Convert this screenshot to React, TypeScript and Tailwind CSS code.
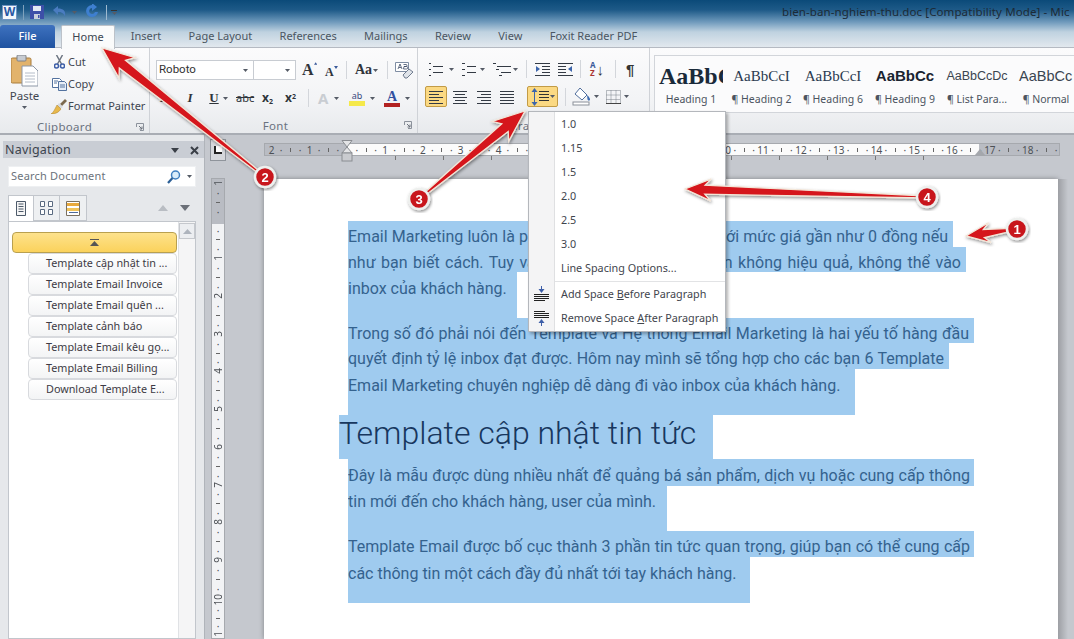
import React from 'react';

const ui = { fontFamily: '"Noto Sans", "Liberation Sans", sans-serif' };
const serif = { fontFamily: '"Liberation Serif", serif' };

const Caret = ({ className = '' }: { className?: string }) => (
  <svg width="5" height="3" viewBox="0 0 5 3" className={className}>
    <path d="M0 0h5L2.5 3z" fill="#555b66" />
  </svg>
);

const Lines = ({ rows, w = 14 }: { rows: number[][]; w?: number }) => (
  <svg width={w} height="14" viewBox={`0 0 ${w} 14`}>
    {rows.map(([x, l], i) => (
      <rect key={i} x={x} y={1 + i * 3} width={l} height="1" fill="#333a44" />
    ))}
  </svg>
);

const IndentIcon = ({ flip = false }: { flip?: boolean }) => (
  <svg width="15" height="14" viewBox="0 0 15 14" className={flip ? '-scale-x-100' : ''}>
    {[1, 4, 7, 10, 13].map((y, i) => (
      <rect key={y} x={i === 0 || i === 4 ? 0 : 7} y={y} width={i === 0 || i === 4 ? 15 : 8} height="1" fill="#333a44" />
    ))}
    <path d="M5 7L1 4v6z" fill="#3d65ab" />
  </svg>
);

const SaveIcon = () => (
  <svg width="14" height="14" viewBox="0 0 14 14">
    <path d="M0 0h14v14H0z" fill="#3d4fa8" />
    <path d="M3 1h8v5H3z" fill="#e4e9f4" />
    <path d="M4 9h6v5H4z" fill="#c8cfdc" />
    <path d="M8 10h1.500v3H8z" fill="#3d4fa8" />
  </svg>
);

const UndoIcon = () => (
  <svg width="15" height="14" viewBox="0 0 15 14">
    <path d="M1 5l5-4v2.500c5 0 8 2 7 8-1-3-3-4.500-7-4.500v3z" fill="#4a7cc0" />
  </svg>
);

const RedoIcon = () => (
  <svg width="14" height="16" viewBox="0 0 14 16">
    <path d="M7 1a6 6 0 1 0 6 7h-3a3 3 0 1 1-3-4v3l5-4-5-4z" fill="#3e7fd0" />
  </svg>
);

const PasteIcon = () => (
  <svg width="27" height="32" viewBox="0 0 27 32">
    <rect x="0" y="3" width="20" height="25" rx="1.500" fill="#e2b36c" stroke="#a97c3c" />
    <rect x="6" y="0" width="9" height="6" rx="1" fill="#c7cbd1" stroke="#7e8288" />
    <path d="M11 11h11l5 5v15H11z" fill="#fff" stroke="#8d97a6" />
    <path d="M14 18h10M14 21h10M14 24h10M14 27h10" stroke="#b4bcc8" />
  </svg>
);

const ScissorsIcon = () => (
  <svg width="11" height="14" viewBox="0 0 11 14">
    <path d="M2.500 0l5 9M8.500 0l-5 9" stroke="#6d7582" strokeWidth="1.500" />
    <circle cx="2.500" cy="11" r="2" fill="none" stroke="#3d5ea8" strokeWidth="1.500" />
    <circle cx="8.500" cy="11" r="2" fill="none" stroke="#3d5ea8" strokeWidth="1.500" />
  </svg>
);

const CopyIcon = () => (
  <svg width="15" height="13" viewBox="0 0 15 13">
    <path d="M.5.500h7l2 2v7h-9z" fill="#fff" stroke="#53729f" />
    <path d="M6.500 3.500h6l2 2v7h-8z" fill="#e7eef8" stroke="#53729f" />
    <path d="M8 7h5M8 9h5M2 3h4M2 5h3" stroke="#53729f" />
  </svg>
);

const BrushIcon = () => (
  <svg width="16" height="15" viewBox="0 0 16 15">
    <path d="M9 5l5-5 2 2-5 5z" fill="#7d6a4f" />
    <path d="M8 4l4 4-3 2-3-3z" fill="#d7d9dd" />
    <path d="M6 6l4 4c-2 3-5 5-10 5 2-1 4-5 6-9z" fill="#e8b94c" stroke="#a87f2b" strokeWidth=".5" />
  </svg>
);

const ClearIcon = () => (
  <svg width="18" height="17" viewBox="0 0 18 17">
    <path d="M.5.500h13v9H.5z" fill="#fff" stroke="#7f8da3" />
    <path d="M3 7l2-5 2 5M4 5.500h2M8.500 2.500h2.500a1 1 0 0 1 0 2H9m0 0h2.500a1 1 0 0 1 0 2.500H8.500z" fill="none" stroke="#3c4a66" strokeWidth=".8" />
    <path d="M8 13l6-6 4 3-6 6H10z" fill="#dfe3e9" stroke="#6f7b8e" />
  </svg>
);

const ShadingIcon = () => (
  <svg width="20" height="19" viewBox="0 0 20 19">
    <path d="M8 1l7 7-5 5-7-6z" fill="#fff" stroke="#4f6d9c" />
    <path d="M15 8c2 2 3 3 3 4.500s-2 1.500-2.500 0z" fill="#3d6bb0" />
    <rect x="1" y="15" width="16" height="3" fill="#fff" stroke="#8a9099" />
  </svg>
);

const BorderIcon = () => (
  <svg width="15" height="14" viewBox="0 0 15 14">
    <path d="M.5.500h14v13H.5zM5 .5v13M10 .5v13M.5 5h14M.5 9.500h14" fill="none" stroke="#7a8088" strokeDasharray="1 1" />
    <path d="M0 13.500h15" stroke="#444" />
  </svg>
);

const SpacingIcon = () => (
  <svg width="18" height="18" viewBox="0 0 18 18">
    <path d="M3.500 0l3 4h-6z" fill="#3d65ab" />
    <path d="M3.500 18l3-4h-6z" fill="#3d65ab" />
    <path d="M3.500 4v10" stroke="#3d65ab" />
    <path d="M8 3.500h10M8 6.500h10M8 9.500h10M8 12.500h10" stroke="#333" />
  </svg>
);

const AddSpaceIcon = ({ flip = false }: { flip?: boolean }) => (
  <svg width="15" height="16" viewBox="0 0 15 16" className={flip ? '-scale-y-100' : ''}>
    <path d="M7.500 0v4" stroke="#3d5ea8" />
    <path d="M7.500 7l-3-4h6z" fill="#3d5ea8" />
    <path d="M0 8.500h15M0 10.500h15M0 12.500h15M0 14.500h11" stroke="#222" />
  </svg>
);

const Launcher = () => (
  <svg width="8" height="8" viewBox="0 0 8 8">
    <path d="M.5 4V.5H7.500V7.500H4" fill="none" stroke="#8b919b" />
    <path d="M3 3l3 3M6 3.500V6H3.500" fill="none" stroke="#6d737d" />
  </svg>
);

const Sep = ({ className = '' }: { className?: string }) => <div className={`w-px h-[18px] bg-[#d3d6db] ${className}`} />;

const GroupLabel = ({ text, width, shift = 0 }: { text: string; width: number; shift?: number }) => (
  <div className="h-[18px] flex items-center relative text-[11.500px] text-[#6a7280] tracking-[0.3px] translate-y-[1px]" style={{ width }}>
    <span className="mx-auto" style={{ paddingRight: shift }}>{text}</span>
    <span className="absolute right-[5px] top-[5px]">
      <Launcher />
    </span>
  </div>
);

const tabs = ['Insert', 'Page Layout', 'References', 'Mailings', 'Review', 'View', 'Foxit Reader PDF'];

const TopBars = () => (
  <div className="h-[48px] bg-[linear-gradient(to_bottom,#0b4a79_0px,#1e5a88_10px,#6f9abc_22px,#bfd2e0_32px,#e2e8ee_47px)] border-b border-[#b5bac2] relative">
    <div className="h-[24px] flex items-center pl-[2px]">
      <div className="w-[15px] h-[15px] bg-[#f3f6fb] border border-[#6f93c2] flex items-center justify-center text-[12px] leading-none font-bold text-[#2857a4]">W</div>
      <div className="w-px h-[15px] bg-[#7fa2bd] ml-[6px]" />
      <div className="ml-[6px]"><SaveIcon /></div>
      <div className="ml-[8px]"><UndoIcon /></div>
      <Caret className="ml-[5px]" />
      <div className="ml-[8px]"><RedoIcon /></div>
      <div className="w-px h-[15px] bg-[#9ebad0] ml-[7px]" />
      <div className="ml-[4px] flex flex-col items-center gap-[1px]">
        <div className="w-[6px] h-px bg-[#333]" />
        <Caret />
      </div>
      <div className="ml-auto text-[11.500px] text-[#1c2a36] whitespace-nowrap w-[292px] tracking-[0.1px]" style={ui}>bien-ban-nghiem-thu.doc [Compatibility Mode] - Mic</div>
    </div>
    <div className="h-[24px] flex items-end text-[11px]" style={ui}>
      <div className="w-[55px] h-[23px] bg-[linear-gradient(to_bottom,#3e72bf,#1f52a0)] rounded-t-[3px] text-white font-medium flex items-center justify-center">File</div>
      <div className="w-[54px] h-[24px] ml-[6px] bg-[#fafbfb] border border-b-0 border-[#bcc2c9] rounded-t-[2px] text-[#3d4650] flex items-center justify-center relative -mb-px z-[1]">Home</div>
      <div className="flex h-[23px] items-center pl-[2px] text-[#4b5662]">
        {tabs.map((t) => (
          <span key={t} className="px-[13.700px] whitespace-nowrap">{t}</span>
        ))}
      </div>
    </div>
  </div>
);

const ClipboardGroup = () => (
  <div className="w-[150px] flex flex-col border-r border-[#cfd2d7]">
    <div className="flex h-[69px]">
      <div className="w-[50px] flex flex-col items-center pt-[7px] pr-[1px]">
        <PasteIcon />
        <span className="text-[11.500px] mt-[1px] text-[#3f4650] leading-[15px]">Paste</span>
        <Caret className="mt-[3px]" />
      </div>
      <div className="flex flex-col text-[11px] text-[#3f4650] pt-[3px]">
        {[
          { label: 'Cut', icon: <ScissorsIcon /> },
          { label: 'Copy', icon: <CopyIcon /> },
          { label: 'Format Painter', icon: <BrushIcon /> },
        ].map((r) => (
          <div key={r.label} className="h-[22px] flex items-center whitespace-nowrap">
            <span className="w-[18px] flex justify-center">{r.icon}</span>
            <span>{r.label}</span>
          </div>
        ))}
      </div>
    </div>
    <GroupLabel text="Clipboard" width={149} shift={20} />
  </div>
);

const FontGroup = () => (
  <div className="w-[268px] flex flex-col border-r border-[#cfd2d7]">
    <div className="h-[69px] pl-[6px] pt-[12px]">
      <div className="flex items-center h-[20px]">
        <div className="w-[98px] h-[20px] bg-white border border-[#c8ccd2] flex items-center justify-between px-[2px] pr-[5px] text-[11.500px] text-[#333]" style={{ fontFamily: 'Roboto, sans-serif' }}>
          Roboto <Caret />
        </div>
        <div className="w-[42px] h-[20px] bg-white border border-l-0 border-[#c8ccd2] flex items-center justify-end pr-[5px]"><Caret /></div>
        <div className="ml-[6px] w-[15px] text-[16px] font-bold leading-none text-[#30343a] flex items-start" style={serif}>A<svg width="4" height="3" viewBox="0 0 4 3"><path d="M0 3h4L2 0z" fill="#3b5a9a" /></svg></div>
        <div className="ml-[8px] w-[15px] text-[12px] font-bold leading-none text-[#30343a] mt-[3px] flex items-start" style={serif}>A<svg width="4" height="3" viewBox="0 0 4 3"><path d="M0 0h4L2 3z" fill="#3b5a9a" /></svg></div>
        <Sep className="ml-[6px]" />
        <div className="ml-[8px] w-[24px] flex items-center text-[14px] font-bold leading-none text-[#30343a]" style={serif}>Aa<Caret className="ml-[1px]" /></div>
        <Sep className="ml-[8px]" />
        <div className="ml-[7px]"><ClearIcon /></div>
      </div>
      <div className="flex items-center h-[20px] mt-[8px] text-[#2f343a] font-bold">
        <span className="w-[14px] text-center ml-[1px] text-[13px]" style={serif}>B</span>
        <span className="ml-[13px] w-[12px] text-center text-[13px] italic" style={serif}>I</span>
        <span className="ml-[12px] w-[12px] text-center text-[13px] underline" style={serif}>U</span>
        <Caret className="ml-[3px]" />
        <span className="ml-[8px] w-[18px] text-[11px] font-normal line-through">abc</span>
        <span className="ml-[8px] w-[14px] text-[12px]">x<sub className="text-[7px]">2</sub></span>
        <span className="ml-[9px] w-[14px] text-[12px]">x<sup className="text-[7px]">2</sup></span>
        <Sep className="ml-[9px]" />
        <span className="ml-[9px] w-[14px] text-[15px] leading-none text-[#c9cdd2]">A</span>
        <Caret className="ml-[2px]" />
        <div className="ml-[10px] w-[16px] flex flex-col items-center">
          <span className="text-[9px] leading-[11px] font-normal text-[#3a4a80]">ab</span>
          <span className="w-[16px] h-[5px] bg-[#f5e94a]" />
        </div>
        <Caret className="ml-[5px]" />
        <div className="ml-[9px] w-[16px] flex flex-col items-center">
          <span className="text-[14px] leading-[13px] text-[#3250a0]" style={serif}>A</span>
          <span className="w-[16px] h-[4px] bg-[#b22222]" />
        </div>
        <Caret className="ml-[5px]" />
      </div>
    </div>
    <GroupLabel text="Font" width={267} shift={16} />
  </div>
);

const ParagraphGroup = () => (
  <div className="w-[232px] flex flex-col border-r border-[#cfd2d7]">
    <div className="h-[69px] pl-[7px] pt-[11px]">
      <div className="flex items-center h-[20px] pl-[4px]">
        <Lines rows={[[0, 2], [4, 10], [0, 2], [4, 10], [0, 2]]} />
        <Caret className="ml-[6px]" />
        <div className="ml-[8px]"><Lines rows={[[0, 3], [5, 9], [0, 3], [5, 9], [0, 3]]} /></div>
        <Caret className="ml-[4px]" />
        <div className="ml-[8px]"><Lines w={18} rows={[[0, 3], [4, 14], [3, 3], [8, 10], [6, 3]]} /></div>
        <Caret className="ml-[2px]" />
        <Sep className="ml-[8px]" />
        <div className="ml-[8px]"><IndentIcon /></div>
        <div className="ml-[8px]"><IndentIcon flip /></div>
        <Sep className="ml-[7px]" />
        <div className="ml-[9px] w-[16px] flex items-center gap-[1px] text-[8px] leading-[8px] font-bold text-[#3b5a9a]">
          <span className="flex flex-col"><span>A</span><span className="text-[#a33]">Z</span></span>
          <span className="text-[15px] leading-none text-[#333] font-normal">↓</span>
        </div>
        <Sep className="ml-[9px]" />
        <span className="ml-[10px] text-[15px] leading-none text-[#333] font-bold" style={{ fontFamily: '"Liberation Sans", sans-serif' }}>¶</span>
      </div>
      <div className="flex items-center h-[21px] mt-[7px]">
        <div className="w-[22px] h-[21px] bg-[#fbd983] border border-[#c29b46] rounded-[2px] flex items-center justify-center"><Lines w={14} rows={[[0, 14], [0, 10], [0, 14], [0, 10], [0, 14]]} /></div>
        <div className="ml-[6px] w-[14px]"><Lines rows={[[0, 14], [2, 10], [0, 14], [2, 10], [0, 14]]} /></div>
        <div className="ml-[10px] w-[14px]"><Lines rows={[[0, 14], [4, 10], [0, 14], [4, 10], [0, 14]]} /></div>
        <div className="ml-[9px] w-[14px]"><Lines rows={[[0, 14], [0, 14], [0, 14], [0, 14], [0, 14]]} /></div>
        <div className="ml-[13px] w-[31px] h-[21px] bg-[#fbd983] border border-[#c29b46] rounded-[2px] flex items-center pl-[3px] gap-[1px]">
          <SpacingIcon /><Caret />
        </div>
        <Sep className="ml-[7px]" />
        <div className="ml-[6px]"><ShadingIcon /></div>
        <Caret className="ml-[2px]" />
        <div className="ml-[7px]"><BorderIcon /></div>
        <Caret className="ml-[3px]" />
      </div>
    </div>
    <GroupLabel text="Paragraph" width={231} />
  </div>
);

const styleCells = [
  { sample: 'AaBbC', label: 'Heading 1', cls: 'text-[24px] font-bold text-[#1a2a3a] w-[64px] text-left', font: '"Liberation Serif", serif', w: 70 },
  { sample: 'AaBbCcI', label: '¶ Heading 2', cls: 'text-[15px] text-[#2a3a50] w-[66px] text-center', font: '"Liberation Serif", serif', w: 71 },
  { sample: 'AaBbCcI', label: '¶ Heading 6', cls: 'text-[15px] text-[#2a3a50] w-[66px] text-center', font: '"Liberation Serif", serif', w: 72 },
  { sample: 'AaBbCc', label: '¶ Heading 9', cls: 'text-[15px] font-bold text-[#1a2430] w-[66px] text-center', font: '"Liberation Sans", sans-serif', w: 72 },
  { sample: 'AaBbCcDc', label: '¶ List Para...', cls: 'text-[12.500px] text-[#3a4550] w-[62px] text-center', font: '"Liberation Sans", sans-serif', w: 72 },
  { sample: 'AaBbCc', label: '¶ Normal', cls: 'text-[14.500px] text-[#3a4550] w-[62px] text-left pl-[4px]', font: '"Liberation Sans", sans-serif', w: 66 },
];

const StylesGroup = () => (
  <div className="flex-1 pl-[4px] pt-[7px] min-w-0">
    <div className="h-[58px] border border-r-0 border-[#d2d5da] bg-[#fbfbfc] flex pl-[1px] overflow-hidden">
      {styleCells.map((c) => (
        <div key={c.label} className="flex flex-col items-center shrink-0 pt-[9px] overflow-hidden" style={{ width: c.w }}>
          <div className={`h-[22px] leading-[22px] whitespace-nowrap overflow-hidden ${c.cls}`} style={{ fontFamily: c.font }}>{c.sample}</div>
          <div className="text-[10.500px] text-[#4b5460] mt-[5px] whitespace-nowrap leading-[14px]">{c.label}</div>
        </div>
      ))}
    </div>
  </div>
);

const Ribbon = () => (
  <div className="h-[87px] flex bg-[linear-gradient(to_bottom,#fbfbfc,#f3f4f6_60%,#e8eaed)] border-b-2 border-[#a9adb4]" style={ui}>
    <ClipboardGroup />
    <FontGroup />
    <ParagraphGroup />
    <StylesGroup />
  </div>
);

const navItems = [
  'Template cập nhật tin ...',
  'Template Email Invoice',
  'Template Email quên ...',
  'Template cảnh báo',
  'Template Email kêu gọ...',
  'Template Email Billing',
  'Download Template E...',
];

const NavPane = () => (
  <div className="w-[205px] shrink-0 bg-[#e6e8eb] border-r border-[#b0b4ba] flex flex-col pt-[6px]" style={ui}>
    <div className="h-[17px] bg-[#c9cdd4] ml-[3px] flex items-center pl-[2px] pt-[2px] text-[12.500px] text-[#3d444e] tracking-[0.2px]">
      Navigation
      <svg width="8" height="5" viewBox="0 0 8 5" className="ml-auto mr-[11px]"><path d="M0 0h8L4 5z" fill="#3a3f47" /></svg>
      <svg width="9" height="9" viewBox="0 0 9 9" className="mr-[5px]"><path d="M1 1l7 7M8 1l-7 7" stroke="#3a3f47" strokeWidth="2" /></svg>
    </div>
    <div className="mt-[8px] mx-[8px] h-[21px] bg-white border border-[#eef0f2] flex items-center pl-[2px] text-[11px] text-[#6b727b] tracking-[0.2px]">
      Search Document
      <svg width="14" height="14" viewBox="0 0 14 14" className="ml-auto mr-[6px]">
        <circle cx="8.500" cy="5" r="4" fill="#d9ecfa" stroke="#3f7fc0" strokeWidth="1.500" />
        <path d="M5.500 8L1 13" stroke="#2c5f96" strokeWidth="2.200" />
      </svg>
      <Caret className="mr-[3px]" />
    </div>
    <div className="mt-[8px] mx-[8px] h-[26px] flex items-end">
      <div className="w-[26px] h-[26px] bg-white border border-b-0 border-[#c2c6cc] flex items-center justify-center">
        <svg width="10" height="15" viewBox="0 0 10 15"><path d="M.5.500h9v14h-9zM2.500 3h5M2.500 5.500h5M2.500 8h5M2.500 10.500h5" fill="#f5f5f5" stroke="#4d5a6a" /></svg>
      </div>
      <div className="w-[26px] h-[26px] bg-[#eef0f2] border border-l-0 border-[#c2c6cc] flex items-center justify-center">
        <svg width="13" height="14" viewBox="0 0 13 14"><path d="M.5.500h4v5h-4zM8.500.500h4v5h-4zM.5 8.500h4v5h-4zM8.500 8.500h4v5h-4z" fill="#fff" stroke="#5a6a80" /></svg>
      </div>
      <div className="w-[27px] h-[26px] bg-[#eef0f2] border border-l-0 border-[#c2c6cc] flex items-center justify-center">
        <svg width="14" height="15" viewBox="0 0 14 15"><path d="M.5.500h13v14H.5z" fill="#fff" stroke="#7a7060" /><path d="M1 2h12v3H1z" fill="#e8a93c" /><path d="M1 7h12v3H1z" fill="#f0c35a" /><path d="M3 11.500h9" stroke="#4d6a9a" /></svg>
      </div>
      <svg width="10" height="6" viewBox="0 0 10 6" className="ml-auto mb-[10px]"><path d="M0 6h10L5 0z" fill="#b9bdc3" /></svg>
      <svg width="10" height="6" viewBox="0 0 10 6" className="mb-[10px] mr-[6px] ml-[12px]"><path d="M0 0h10L5 6z" fill="#6b7078" /></svg>
    </div>
    <div className="flex-1 mx-[8px] bg-white border border-[#c2c6cc] flex min-h-0">
      <div className="flex-1 min-w-0 pl-[3px] pt-[10px] flex flex-col pr-[1px]">
        <div className="h-[21px] bg-[linear-gradient(to_bottom,#fde28c,#fbd25c)] border border-[#b9a04f] rounded-[4px] flex items-center justify-center">
          <svg width="9" height="7" viewBox="0 0 9 7"><path d="M0 .5h9" stroke="#555" /><path d="M0 7l4.500-5L9 7z" fill="#555" /></svg>
        </div>
        <div className="flex flex-col ml-[16px]">
          {navItems.map((t) => (
            <div key={t} className="h-[21px] bg-[linear-gradient(to_bottom,#fff,#f3f4f5)] border border-[#d8dade] rounded-[4px] pl-[17px] flex items-center text-[10.800px] text-[#3d3a44] whitespace-nowrap overflow-hidden">
              {t}
            </div>
          ))}
        </div>
      </div>
      <div className="w-[17px] shrink-0 bg-[#f5f5f6] border-l border-[#e0e2e5] pt-[1px]">
        <div className="h-[16px] bg-[#eceef1] border border-[#c5c8cd] flex items-center justify-center">
          <svg width="9" height="5" viewBox="0 0 9 5"><path d="M0 5h9L4.500 0z" fill="#aeb4bd" /></svg>
        </div>
      </div>
    </div>
  </div>
);

const hLabels = ['2', '1', '', '1', '2', '3', '4', '5', '6', '7', '8', '9', '10', '11', '12', '13', '14', '15', '16', '17', '18'];
const vLabels = ['1', '', '1', '2', '3', '4', '5', '6', '7', '8', '9', '10', '11'];

const RulerCell = ({ label, vertical = false }: { label: string; vertical?: boolean }) => {
  const slot = 'flex-1 flex items-center justify-center min-w-0';
  const tick = vertical ? 'w-[4px] h-px bg-[#666]' : 'w-px h-[4px] bg-[#666]';
  return (
    <div className={`shrink-0 flex ${vertical ? 'flex-col h-[37.700px] w-full' : 'w-[37.800px] h-full'}`}>
      <span className={`${slot} ${vertical ? '[writing-mode:vertical-rl] rotate-180' : ''}`}>{label}</span>
      <span className={slot}>·</span>
      <span className={slot}><span className={tick} /></span>
      <span className={slot}>·</span>
    </div>
  );
};

type Line = { text: string; box: number; h: number; fit?: number; pad?: number };

const para1: Line[] = [
  { text: 'Email Marketing luôn là phương pháp hiệu quả nhất với mức giá gần như 0 đồng nếu', box: 605, h: 26, fit: 600 },
  { text: 'như bạn biết cách. Tuy vậy, nhiều chiến dịch của bạn không hiệu quả, không thể vào', box: 618, h: 25, fit: 613 },
  { text: 'inbox của khách hàng.', box: 169, h: 46, pad: 4 },
];
const para2: Line[] = [
  { text: 'Trong số đó phải nói đến Template và Hệ thống Email Marketing là hai yếu tố hàng đầu', box: 626, h: 25, fit: 621 },
  { text: 'quyết định tỷ lệ inbox đạt được. Hôm nay mình sẽ tổng hợp cho các bạn 6 Template', box: 601, h: 26, fit: 596 },
  { text: 'Email Marketing chuyên nghiệp dễ dàng đi vào inbox của khách hàng.', box: 507, h: 46, pad: 4 },
];
const para3: Line[] = [
  { text: 'Đây là mẫu được dùng nhiều nhất để quảng bá sản phẩm, dịch vụ hoặc cung cấp thông', box: 626, h: 27, fit: 622, pad: 4 },
  { text: 'tin mới đến cho khách hàng, user của mình.', box: 319, h: 45 },
  { text: 'Template Email được bố cục thành 3 phần tin tức quan trọng, giúp bạn có thể cung cấp', box: 626, h: 26, fit: 622, pad: 3 },
  { text: 'các thông tin một cách đầy đủ nhất tới tay khách hàng.', box: 402, h: 46, pad: 4 },
];

const DocLines = ({ lines }: { lines: Line[] }) => (
  <>
    {lines.map((l) => (
      <div key={l.text} className="bg-[#9fcbef] overflow-hidden" style={{ width: l.box, height: l.h, paddingTop: l.pad ?? 3 }}>
        <div
          className={`leading-[26px] ${l.fit ? '[text-align-last:justify]' : 'whitespace-nowrap'}`}
          style={l.fit ? { width: l.fit } : undefined}
        >
          {l.text}
        </div>
      </div>
    ))}
  </>
);

const Page = () => (
  <div className="ml-[39px] w-[794px] shrink-0 bg-white pl-[84px] pt-[42px] text-[16px] text-[#34628e] overflow-hidden shadow-[0_0_5px_rgba(0,0,0,0.35)]" style={{ fontFamily: 'Roboto, sans-serif' }}>
    <DocLines lines={para1} />
    <DocLines lines={para2} />
    <div className="ml-[-9px] w-[374px] h-[44px] bg-[#9fcbef] text-[32px] leading-[36px] font-light text-[#17375e] whitespace-nowrap">Template cập nhật tin tức</div>
    <DocLines lines={para3} />
  </div>
);

const Workspace = () => (
  <div className="flex-1 min-w-0 flex flex-col bg-[#c5c8ce]" style={ui}>
    <div className="h-[44px] flex relative shrink-0">
      <div className="ml-[5px] mt-[4px] w-[16px] h-[22px] bg-[#d5d7db] border border-[#8f949b] flex items-center justify-center">
        <div className="w-[8px] h-[8px] bg-white border-l-2 border-b-2 border-[#222]" />
      </div>
      <div className="ml-[38px] mt-[8px] w-[796px] flex flex-col">
        <div className="h-[13px] border border-[#a6a9ae] overflow-hidden bg-[linear-gradient(to_right,#b9bcc3_83px,#fbfbfb_83px,#fbfbfb_714px,#b9bcc3_714px)] text-[10px] leading-none text-[#4d5156] flex pl-[2px]">
          {hLabels.map((l, i) => (
            <RulerCell key={i} label={l} />
          ))}
        </div>
        <div className="h-[4px] flex pl-[131px]">
          {Array.from({ length: 12 }).map((_, i) => (
            <div key={i} className="w-[48px] shrink-0 border-l border-[#777]" />
          ))}
        </div>
      </div>
      <svg width="12" height="22" viewBox="0 0 12 22" className="absolute left-[136px] top-[5px]">
        <path d="M1 .5h10L6 7l5 6H1l5-6z" fill="#e3e4e6" stroke="#8a8d92" />
        <rect x="1" y="13" width="10" height="8" fill="#c9cbcf" stroke="#8a8d92" />
      </svg>
      <svg width="10" height="7" viewBox="0 0 10 7" className="absolute left-[770px] top-[14px]">
        <path d="M5 0l5 6v1H0V6z" fill="#a4a7ac" />
      </svg>
    </div>
    <div className="flex-1 flex min-h-0">
      <div className="ml-[6px] mt-[-1px] w-[14px] shrink-0 border border-[#a6a9ae] overflow-hidden bg-[linear-gradient(to_bottom,#b9bcc3_45px,#f2f3f5_45px)] text-[10px] leading-none text-[#4d5156] flex flex-col">
        {vLabels.map((l, i) => (
          <RulerCell key={i} label={l} vertical />
        ))}
      </div>
      <Page />
      <div className="flex-1 bg-[linear-gradient(to_right,#9d9fa4,#c5c8ce_10px)]" />
    </div>
  </div>
);

const MenuRow = ({ children, icon }: { children: React.ReactNode; icon?: React.ReactNode }) => (
  <div className="h-[24px] flex items-center">
    <div className="w-[25px] shrink-0 flex justify-center">{icon}</div>
    <div className="pl-[7px] whitespace-nowrap">{children}</div>
  </div>
);

const SpacingMenu = () => (
  <div className="absolute left-[528px] top-[111px] w-[198px] h-[221px] z-10 border border-[#b4b7bc] shadow-[2px_2px_3px_rgba(0,0,0,0.3)] text-[10.800px] text-[#3f454d] flex flex-col bg-[linear-gradient(to_right,#f4f4f5_25px,#dfe0e2_25px,#dfe0e2_26px,#fff_26px)]" style={ui}>
    {['1.0', '1.15', '1.5', '2.0', '2.5', '3.0', 'Line Spacing Options...'].map((t) => (
      <MenuRow key={t}>{t}</MenuRow>
    ))}
    <div className="ml-[26px] h-px bg-[#e2e3e5] mt-px" />
    <MenuRow icon={<AddSpaceIcon />}>
      Add Space <span className="underline">B</span>efore Paragraph
    </MenuRow>
    <MenuRow icon={<AddSpaceIcon flip />}>
      Remove Space <span className="underline">A</span>fter Paragraph
    </MenuRow>
  </div>
);

// tapered arrow from (x1,y1) to the tip at (x2,y2)
const arrowPoints = (x1: number, y1: number, x2: number, y2: number, head: number, wing: number, neck: number) => {
  const dx = x2 - x1;
  const dy = y2 - y1;
  const len = Math.hypot(dx, dy);
  const ux = dx / len;
  const uy = dy / len;
  const at = (d: number, s: number) => `${(x1 + ux * d - uy * s).toFixed(1)},${(y1 + uy * d + ux * s).toFixed(1)}`;
  return [
    at(0, 1),
    at(len - head + 6, neck),
    at(len - head, wing),
    at(len, 0),
    at(len - head, -wing),
    at(len - head + 6, -neck),
    at(0, -1),
  ].join(' ');
};

const arrows = [
  { id: 1, from: [1017, 229], to: [966, 236], head: 24, wing: 10, neck: 4 },
  { id: 2, from: [265, 177], to: [102, 48], head: 32, wing: 13, neck: 5 },
  { id: 3, from: [419, 199], to: [525, 111], head: 32, wing: 13, neck: 5 },
  { id: 4, from: [927, 197], to: [685, 189], head: 26, wing: 11, neck: 4.500 },
];

const Annotations = () => (
  <svg width="1074" height="639" viewBox="0 0 1074 639" className="absolute left-0 top-0 z-20 pointer-events-none">
    <defs>
      <filter id="soft" x="-20%" y="-20%" width="140%" height="140%">
        <feDropShadow dx="1" dy="1.500" stdDeviation="1.500" floodColor="#000" floodOpacity="0.45" />
      </filter>
    </defs>
    {arrows.map((a) => (
      <polygon
        key={a.id}
        points={arrowPoints(a.from[0], a.from[1], a.to[0], a.to[1], a.head, a.wing, a.neck)}
        fill="#d5141a"
        stroke="#f3e6d8"
        strokeWidth="1.300"
        filter="url(#soft)"
      />
    ))}
    {arrows.map((a) => (
      <g key={a.id} filter="url(#soft)">
        <circle cx={a.from[0]} cy={a.from[1]} r="10" fill="#c8141c" stroke="#eef0ee" strokeWidth="2.500" />
        <text x={a.from[0]} y={a.from[1] + 4.500} textAnchor="middle" fontSize="13" fontWeight="700" fill="#fff" fontFamily="Liberation Sans, sans-serif">
          {a.id}
        </text>
      </g>
    ))}
  </svg>
);

export default function App() {
  return (
    <div className="relative w-[1074px] h-[639px] overflow-hidden flex flex-col">
      <TopBars />
      <Ribbon />
      <div className="flex-1 flex min-h-0">
        <NavPane />
        <Workspace />
      </div>
      <SpacingMenu />
      <Annotations />
    </div>
  );
}
